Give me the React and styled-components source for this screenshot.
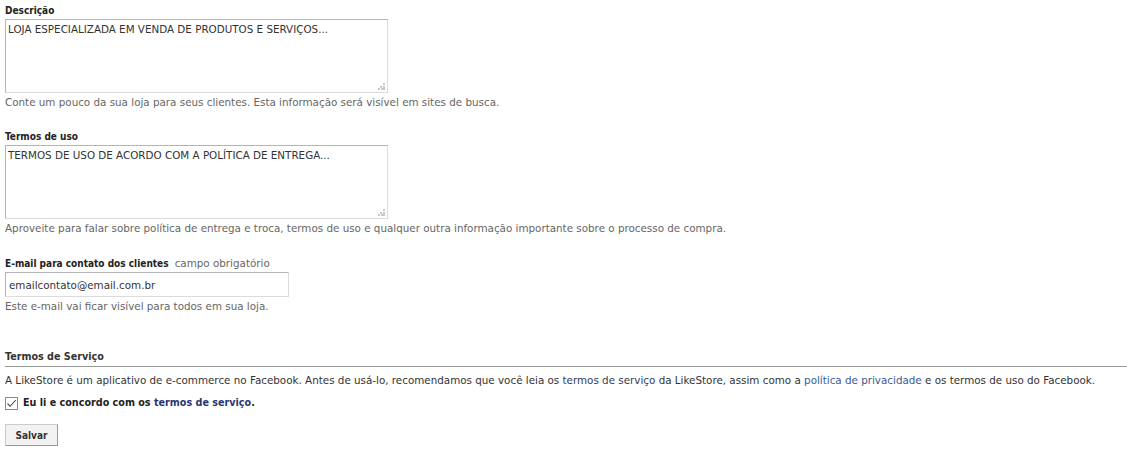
import React, { useState } from "react";
import styled, { createGlobalStyle } from "styled-components";

const GlobalStyle = createGlobalStyle`
  body {
    margin: 0;
    background: #fff;
    font-family: "DejaVu Sans", Verdana, sans-serif;
    font-size: 10.35px;
    color: #333;
  }
`;

const BOLD_FONT = `"DejaVu Sans Condensed", "DejaVu Sans", Verdana, sans-serif`;

const App = () => {
  const [agreed, setAgreed] = useState(true);

  return (
    <>
      <GlobalStyle />
      <Form onSubmit={(e) => e.preventDefault()}>
        <Field>
          <Label>Descrição</Label>
          <TextAreaWrap>
            <TextArea defaultValue="LOJA ESPECIALIZADA EM VENDA DE PRODUTOS E SERVIÇOS..." />
            <Grip />
          </TextAreaWrap>
          <Hint>Conte um pouco da sua loja para seus clientes. Esta informação será visível em sites de busca.</Hint>
        </Field>

        <Field>
          <Label>Termos de uso</Label>
          <TextAreaWrap>
            <TextArea defaultValue="TERMOS DE USO DE ACORDO COM A POLÍTICA DE ENTREGA..." />
            <Grip />
          </TextAreaWrap>
          <Hint>
            Aproveite para falar sobre política de entrega e troca, termos de uso e qualquer outra informação
            importante sobre o processo de compra.
          </Hint>
        </Field>

        <Field>
          <Label>
            E-mail para contato dos clientes <Required>campo obrigatório</Required>
          </Label>
          <Input defaultValue="emailcontato@email.com.br" />
          <Hint>Este e-mail vai ficar visível para todos em sua loja.</Hint>
        </Field>

        <Section>
          <SectionTitle>Termos de Serviço</SectionTitle>
          <Paragraph>
            A LikeStore é um aplicativo de e-commerce no Facebook. Antes de usá-lo, recomendamos que você leia os{" "}
            <DarkLink href="#">termos de serviço</DarkLink> da LikeStore, assim como a{" "}
            <Link href="#">política de privacidade</Link> e os termos de uso do Facebook.
          </Paragraph>
          <CheckRow>
            <CheckBox onClick={() => setAgreed(!agreed)}>
              {agreed && (
                <svg width="11" height="11" viewBox="0 0 11 11">
                  <path d="M1.5 5.5 L4.2 8.3 L9.8 2" fill="none" stroke="#444" strokeWidth="1.1" />
                </svg>
              )}
            </CheckBox>
            <span>
              Eu li e concordo com os <StrongLink href="#">termos de serviço</StrongLink>.
            </span>
          </CheckRow>
          <Button type="submit">Salvar</Button>
        </Section>
      </Form>
    </>
  );
};

const Form = styled.form`
  display: flex;
  flex-direction: column;
  padding: 4px 5px 0 5px;
`;

const Field = styled.div`
  display: flex;
  flex-direction: column;
  align-items: flex-start;
  margin-bottom: 21px;
`;

const Label = styled.label`
  font-family: ${BOLD_FONT};
  font-weight: bold;
  font-size: 10px;
  color: #222;
  line-height: 14px;
  margin-bottom: 1px;
`;

const Required = styled.span`
  font-family: "DejaVu Sans", Verdana, sans-serif;
  font-weight: normal;
  font-size: 10.35px;
  color: #666;
  margin-left: 3px;
`;

const TextAreaWrap = styled.div`
  position: relative;
  width: 383px;
  height: 74px;
`;

const TextArea = styled.textarea`
  display: block;
  box-sizing: border-box;
  width: 100%;
  height: 100%;
  margin: 0;
  border: 1px solid;
  border-color: #b4b4b4 #dcdcdc #dcdcdc #b4b4b4;
  padding: 3px 2px;
  font-family: "DejaVu Sans", Verdana, sans-serif;
  font-size: 10.35px;
  color: #333;
  resize: none;
  outline: none;
`;

const Grip = styled.span`
  position: absolute;
  right: 3px;
  bottom: 3px;
  width: 7px;
  height: 7px;
  background:
    linear-gradient(#c8c8c8, #c8c8c8) 5px 0 / 2px 2px no-repeat,
    linear-gradient(#c8c8c8, #c8c8c8) 2px 3px / 2px 2px no-repeat,
    linear-gradient(#c8c8c8, #c8c8c8) 5px 3px / 2px 2px no-repeat,
    linear-gradient(#c8c8c8, #c8c8c8) 0 5px / 2px 2px no-repeat,
    linear-gradient(#c8c8c8, #c8c8c8) 3px 5px / 2px 2px no-repeat,
    linear-gradient(#c8c8c8, #c8c8c8) 5px 5px / 2px 2px no-repeat;
  pointer-events: none;
`;

const Input = styled.input`
  box-sizing: border-box;
  width: 284px;
  height: 25px;
  margin: 0;
  border: 1px solid;
  border-color: #b4b4b4 #dcdcdc #dcdcdc #b4b4b4;
  padding: 3px 3px;
  font-family: "DejaVu Sans", Verdana, sans-serif;
  font-size: 10.35px;
  color: #333;
  outline: none;
`;

const Hint = styled.div`
  margin-top: 2px;
  color: #666;
  line-height: 14px;
`;

const Section = styled.div`
  display: flex;
  flex-direction: column;
  align-items: flex-start;
  margin-top: 16px;
`;

const SectionTitle = styled.h3`
  align-self: stretch;
  margin: 0 -5px 0 0;
  font-family: ${BOLD_FONT};
  font-size: 10.7px;
  font-weight: bold;
  line-height: 14px;
  color: #333;
  padding-bottom: 2px;
  border-bottom: 1px solid #999;
`;

const Paragraph = styled.p`
  margin: 6px 0 0;
  line-height: 14px;
  color: #333;
`;

const Link = styled.a`
  color: #3b5998;
  text-decoration: none;
`;

const DarkLink = styled.a`
  color: #333c5a;
  text-decoration: none;
`;

const StrongLink = styled.a`
  color: #2a3575;
  text-decoration: none;
`;

const CheckRow = styled.label`
  display: flex;
  align-items: center;
  gap: 5px;
  margin-top: 9px;
  font-family: ${BOLD_FONT};
  font-weight: bold;
  font-size: 10.7px;
  line-height: 14px;
  color: #222;
  cursor: pointer;
`;

const CheckBox = styled.span`
  box-sizing: border-box;
  width: 13px;
  height: 13px;
  border: 1px solid #888;
  background: #fff;
  display: flex;
  align-items: center;
  justify-content: center;
`;

const Button = styled.button`
  margin-top: 14px;
  width: 53px;
  height: 22px;
  padding: 0;
  background: #f2f2f2;
  border: 1px solid;
  border-color: #ccc #999 #999 #ccc;
  font-family: ${BOLD_FONT};
  font-size: 10px;
  font-weight: bold;
  color: #333;
  cursor: pointer;
`;

export default App;
